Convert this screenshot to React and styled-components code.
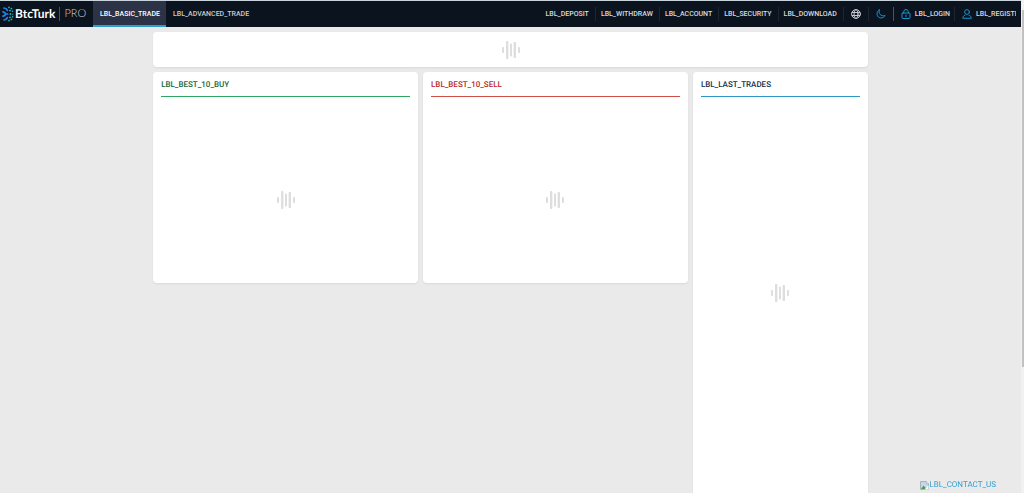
import React from "react";
import styled, { createGlobalStyle } from "styled-components";

const GlobalStyle = createGlobalStyle`
  * { box-sizing: border-box; }
  body {
    margin: 0;
    background: #eaeaea;
    font-family: Roboto, "Liberation Sans", sans-serif;
    text-rendering: geometricPrecision;
  }
`;

const Shell = styled.div`
  display: grid;
  grid-template-columns: minmax(0, 1fr) 3px;
  height: 100vh;
  overflow: hidden;
`;

const Page = styled.div`
  display: flex;
  flex-direction: column;
  min-width: 0;
  min-height: 0;
`;

const ScrollTrack = styled.div`
  background: #f1f1f1;
  padding: 10px 0 0 1px;
`;

const ScrollThumb = styled.div`
  height: 74%;
  background: #c1c1c1;
`;

const Header = styled.header`
  display: flex;
  align-items: stretch;
  height: 27px;
  flex: none;
  border-top: 1px solid #c9d3dc;
  background: #0b131f;
  padding-right: 5px;
`;

const Brand = styled.a`
  display: flex;
  align-items: center;
  width: 93px;
  flex: none;
  padding-left: 2px;
  color: #fff;
  text-decoration: none;
`;

const BrandName = styled.span`
  font: 700 12px/16px Lato, sans-serif;
  margin-left: 1px;
`;

const BrandSuffix = styled.span`
  font: 300 11px/14px Lato, sans-serif;
  color: #d4d7dc;
  margin-left: 4px;
  padding-left: 4px;
  border-left: 1px solid #47505c;
`;

const Nav = styled.nav`
  display: flex;
  align-items: stretch;
`;

const Tab = styled.a`
  display: flex;
  align-items: center;
  padding: 0 6px 0 7px;
  font-size: 7px;
  font-weight: 500;
  line-height: 10px;
  text-decoration: none;
  color: ${(p) => (p.$active ? "#fff" : "#c9ccd1")};
  background: ${(p) => (p.$active ? "#2d3346" : "transparent")};
  border-bottom: 2px solid ${(p) => (p.$active ? "#2c9fd0" : "transparent")};
  border-top: 2px solid transparent;
`;

const Tools = styled(Nav)`
  margin-left: auto;
  align-items: center;
`;

const toolStyle = `
  display: flex;
  align-items: center;
  gap: 4px;
  height: 14px;
  border: 0;
  background: none;
  font: 500 7px/10px Roboto, sans-serif;
  color: #d9dbdf;
  text-decoration: none;
  white-space: nowrap;
`;

const divider = (p) => (p.$last ? "0" : `1px solid ${p.$strong ? "#4a5563" : "#1c2531"}`);

const ToolLink = styled.a`
  ${toolStyle}
  padding: 0 6px 0 5px;
  border-right: ${divider};
`;

const ToolButton = styled.button`
  ${toolStyle}
  padding: 0 7px;
  border-right: ${divider};
`;

const AccountLink = styled(ToolLink)`
  padding: 0 4px 0 7px;
`;

const RegisterLink = styled(AccountLink)`
  width: 61px;
  padding-right: 0;
  overflow: hidden;
`;

const Main = styled.main`
  display: flex;
  flex-direction: column;
  gap: 5px;
  flex: 1;
  min-height: 0;
  width: 70%;
  margin: 0 auto;
  padding-top: 5px;
`;

const Card = styled.section`
  display: flex;
  flex-direction: column;
  background: #fff;
  border-radius: 4px;
  box-shadow: 0 1px 2px rgba(0, 0, 0, 0.08);
`;

const Ticker = styled(Card)`
  height: 35px;
  flex: none;
  align-items: center;
  justify-content: center;
`;

const Columns = styled.div`
  display: grid;
  grid-template-columns: 265fr 265fr 175fr;
  gap: 5px;
  flex: 1;
  min-height: 0;
`;

const BookCard = styled(Card)`
  height: 211px;
  padding: 0 8px;
`;

const TradesCard = styled(Card)`
  padding: 0 8px 24px;
  border-radius: 4px 4px 0 0;
`;

const tones = {
  buy: ["#12673a", "#2fa560"],
  sell: ["#b8281f", "#cf4f45"],
  trades: ["#122c4a", "#2b98c6"],
};

const CardTitle = styled.h2`
  margin: 0;
  height: 25px;
  padding-top: 7px;
  font-size: 8px;
  font-weight: 500;
  line-height: 12px;
  color: ${(p) => tones[p.$tone][0]};
  border-bottom: 1px solid ${(p) => tones[p.$tone][1]};
`;

const CardBody = styled.div`
  display: flex;
  flex: 1;
  align-items: center;
  justify-content: center;
  padding-top: 20px;
`;

const Contact = styled.a`
  position: fixed;
  right: 28px;
  bottom: 2px;
  display: flex;
  align-items: center;
  font-size: 8px;
  line-height: 12px;
  color: #2f9fd0;
  text-decoration: none;
`;

const Loader = () => (
  <svg width="18" height="18" viewBox="0 0 18 18" role="img" aria-label="Loading" fill="#dedede">
    <rect x="0" y="6" width="2" height="6" rx=".8" />
    <rect x="4" y="0" width="2.4" height="18" rx=".8" />
    <rect x="8" y="2.5" width="2" height="13" rx=".8" />
    <rect x="11.6" y="1" width="2.4" height="16" rx=".8" />
    <rect x="16" y="6" width="2" height="6" rx=".8" />
  </svg>
);

const BrandMark = () => (
  <svg width="12" height="16" viewBox="0 0 12 16" aria-hidden="true">
    <g fill="none" stroke="#1e86f0" strokeWidth="1.7" strokeLinecap="round">
      <path d="M2 2C4 2.2 5 3.2 5.4 4.4" />
      <path d="M0.9 5.8C2.6 6 3.4 7 3.6 8C3.4 9 2.6 10 0.9 10.2" />
      <path d="M2 14C4 13.8 5 12.8 5.4 11.6" />
      <path d="M3.6 8H5.6" />
    </g>
    <g fill="#20b4c4">
      <circle cx="7" cy="1.4" r=".9" /><circle cx="9.4" cy="2.6" r=".9" />
      <circle cx="8" cy="4.6" r=".9" /><circle cx="10.6" cy="5.2" r=".8" />
      <circle cx="8.4" cy="8" r=".9" /><circle cx="10.8" cy="8.2" r=".6" />
      <circle cx="8" cy="11.4" r=".9" /><circle cx="10.6" cy="10.9" r=".8" />
      <circle cx="9.4" cy="13.4" r=".9" /><circle cx="7" cy="14.6" r=".9" />
    </g>
  </svg>
);

const IconSvg = styled.svg`
  flex: none;
`;

const Icon = ({ color = "#1b93cc", children }) => (
  <IconSvg width="10" height="10" viewBox="0 0 20 20" fill="none" stroke={color} strokeWidth="2" strokeLinecap="round" strokeLinejoin="round" aria-hidden="true">
    {children}
  </IconSvg>
);

const BrokenImage = () => (
  <svg width="9" height="9" viewBox="0 0 16 16" aria-hidden="true">
    <path d="M1 1h10l4 4v10H1z" fill="#c5d9f3" stroke="#9da1a6" strokeWidth="1.4" />
    <path d="M11 1v4h4" fill="#fff" stroke="#9da1a6" strokeWidth="1.2" />
    <path d="M2 14l4-6 4 4v2z" fill="#4f9d45" />
    <path d="M8 15l7-7v7z" fill="#fff" />
  </svg>
);

const toolLabels = ["LBL_DEPOSIT", "LBL_WITHDRAW", "LBL_ACCOUNT", "LBL_SECURITY", "LBL_DOWNLOAD"];

export default function App() {
  return (
    <>
      <GlobalStyle />
      <Shell>
        <Page>
          <Header>
            <Brand href="#">
              <BrandMark />
              <BrandName>BtcTurk</BrandName>
              <BrandSuffix>PRO</BrandSuffix>
            </Brand>
            <Nav>
              <Tab href="#" $active>LBL_BASIC_TRADE</Tab>
              <Tab href="#">LBL_ADVANCED_TRADE</Tab>
            </Nav>
            <Tools>
              {toolLabels.map((label) => (
                <ToolLink href="#" key={label}>{label}</ToolLink>
              ))}
              <ToolButton type="button" aria-label="Language">
                <Icon color="#c3c7cc">
                  <circle cx="10" cy="10" r="8.8" />
                  <ellipse cx="10" cy="10" rx="4" ry="8.8" />
                  <path d="M2.5 7h15M2.5 13h15" />
                </Icon>
              </ToolButton>
              <ToolButton type="button" aria-label="Dark mode" $strong>
                <Icon>
                  <path d="M6.5 1.8C4.6 9.5 9.5 15 18 13.2C15.5 18 9 19.6 4.8 16C0.5 12 1.4 4.6 6.5 1.8Z" />
                </Icon>
              </ToolButton>
              <AccountLink href="#">
                <Icon>
                  <rect x="2" y="8" width="16" height="11" rx="1.5" />
                  <path d="M5.5 8V5.5a4.5 4.5 0 0 1 9 0V8M10 12v3" />
                </Icon>
                LBL_LOGIN
              </AccountLink>
              <RegisterLink href="#" $last>
                <Icon>
                  <circle cx="10" cy="6" r="4.8" />
                  <path d="M6 12.5C3 13.5 1.5 15.5 1.5 18.5H18.5C18.5 15.5 17 13.5 14 12.5" />
                </Icon>
                LBL_REGISTER
              </RegisterLink>
            </Tools>
          </Header>
          <Main>
            <Ticker><Loader /></Ticker>
            <Columns>
              <BookCard>
                <CardTitle $tone="buy">LBL_BEST_10_BUY</CardTitle>
                <CardBody><Loader /></CardBody>
              </BookCard>
              <BookCard>
                <CardTitle $tone="sell">LBL_BEST_10_SELL</CardTitle>
                <CardBody><Loader /></CardBody>
              </BookCard>
              <TradesCard>
                <CardTitle $tone="trades">LBL_LAST_TRADES</CardTitle>
                <CardBody><Loader /></CardBody>
              </TradesCard>
            </Columns>
          </Main>
        </Page>
        <ScrollTrack><ScrollThumb /></ScrollTrack>
      </Shell>
      <Contact href="#"><BrokenImage />LBL_CONTACT_US</Contact>
    </>
  );
}
